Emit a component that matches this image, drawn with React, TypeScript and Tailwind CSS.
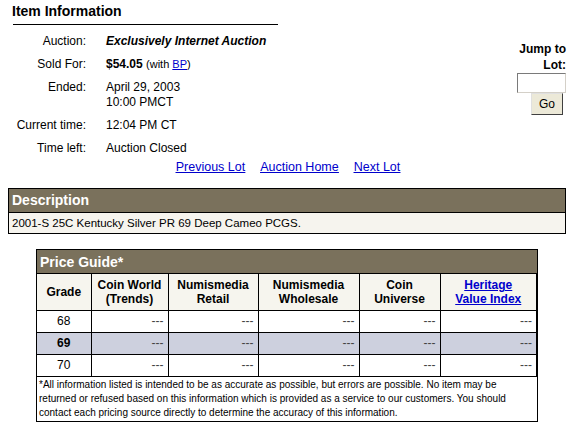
import React from "react";

const rows = [
  { grade: "68", hi: false },
  { grade: "69", hi: true },
  { grade: "70", hi: false },
];

const InfoRow = ({ label, children }: { label: string; children: React.ReactNode }) => (
  <>
    <div className="text-right">{label}</div>
    <div>{children}</div>
  </>
);

export default function App() {
  return (
    <div className="h-[427px] w-[572px] bg-white text-[12px] leading-[15px] text-black [font-family:'Liberation_Sans',Arial,sans-serif]">
      <div className="flex">
        <div className="w-[300px] pt-[3px]">
          <div className="pl-[12px] text-[14px] font-bold leading-[16px]">Item Information</div>
          <div className="ml-[13px] mt-[5px] h-px w-[265px] bg-black" />
          <div className="mt-[9px] grid grid-cols-[86px_1fr] gap-x-[20px] gap-y-[8px]">
            <InfoRow label="Auction:">
              <span className="font-bold italic">Exclusively Internet Auction</span>
            </InfoRow>
            <InfoRow label="Sold For:">
              <span className="font-bold">$54.05</span>{" "}
              <span className="text-[11px]">
                (with <a className="text-[#0000cc] underline">BP</a>)
              </span>
            </InfoRow>
            <InfoRow label="Ended:">
              April 29, 2003
              <br />
              10:00 PMCT
            </InfoRow>
            <InfoRow label="Current time:">12:04 PM CT</InfoRow>
            <InfoRow label="Time left:">Auction Closed</InfoRow>
          </div>
        </div>
        <div className="ml-auto mr-[6px] mt-[41px] flex flex-col items-end">
          <div className="text-right text-[12px] font-bold leading-[16px]">
            Jump to
            <br />
            Lot:
          </div>
          <input className="h-[20px] w-[49px] border border-[#7a7a7a] border-r-[#d4d0c8] border-b-[#d4d0c8] bg-white" />
          <button className="mr-[3px] h-[22px] w-[32px] border border-[#404040] border-l-[#e0e0e0] border-t-[#e0e0e0] bg-[#ece9d8] text-[12px] leading-none">
            Go
          </button>
        </div>
      </div>

      <div className="mt-[4px] flex justify-center gap-[15px] pl-[4px] text-[12.5px] text-[#0000cc] underline">
        <a>Previous Lot</a>
        <a>Auction Home</a>
        <a>Next Lot</a>
      </div>

      <div className="mx-[8px] mt-[13px] w-[558px] border border-black">
        <div className="h-[23px] bg-[#7a715c] pl-[3px] text-[14px] font-bold leading-[23px] text-white">
          Description
        </div>
        <div className="h-[21px] border-t border-black bg-[#f6f4ee] pl-[3px] text-[11.5px] leading-[21px]">
          2001-S 25C Kentucky Silver PR 69 Deep Cameo PCGS.
        </div>
      </div>

      <div className="ml-[36px] mt-[15px] w-[502px] border border-black">
        <div className="h-[23px] bg-[#7a715c] pl-[3px] text-[14px] font-bold leading-[24px] text-white">
          Price Guide*
        </div>
        <table className="w-[500px] table-fixed border-collapse text-[12px]">
          <colgroup>
            <col className="w-[54px]" />
            <col className="w-[77px]" />
            <col className="w-[90px]" />
            <col className="w-[101px]" />
            <col className="w-[81px]" />
            <col className="w-[97px]" />
          </colgroup>
          <thead>
            <tr className="h-[37px] bg-[#f6f5ee] text-[12px] font-bold leading-[14px]">
              <th className="border border-l-0 border-black">Grade</th>
              <th className="border border-black">
                Coin World
                <br />
                (Trends)
              </th>
              <th className="border border-black">
                Numismedia
                <br />
                Retail
              </th>
              <th className="border border-black">
                Numismedia
                <br />
                Wholesale
              </th>
              <th className="border border-black">
                Coin
                <br />
                Universe
              </th>
              <th className="border border-r-2 border-black">
                <a className="text-[#0000cc] underline">
                  Heritage
                  <br />
                  Value Index
                </a>
              </th>
            </tr>
          </thead>
          <tbody>
            {rows.map((r) => (
              <tr key={r.grade} className={`h-[22px] ${r.hi ? "bg-[#cdd0de]" : "bg-white"}`}>
                <td className={`border border-l-0 border-black text-center ${r.hi ? "font-bold" : ""}`}>
                  {r.grade}
                </td>
                <td className="border border-black pr-[4px] text-right text-[#444]">---</td>
                <td className="border border-black pr-[4px] text-right text-[#444]">---</td>
                <td className="border border-black pr-[4px] text-right text-[#444]">---</td>
                <td className="border border-black pr-[4px] text-right text-[#444]">---</td>
                <td className="border border-r-2 border-black pr-[4px] text-right text-[#444]">---</td>
              </tr>
            ))}
          </tbody>
        </table>
        <div className="px-[2px] pb-[1px] pt-[1px] text-[10px] leading-[14px]">
          *All information listed is intended to be as accurate as possible, but errors are possible. No item may be
          <br />
          returned or refused based on this information which is provided as a service to our customers. You should
          <br />
          contact each pricing source directly to determine the accuracy of this information.
        </div>
      </div>
    </div>
  );
}
